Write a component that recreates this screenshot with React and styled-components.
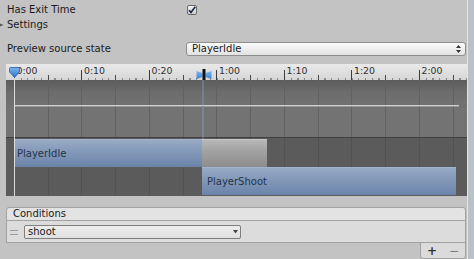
import React from 'react';
import styled, { createGlobalStyle } from 'styled-components';

const Global = createGlobalStyle`
  html, body { margin: 0; padding: 0; background: #c3c3c3; }
  body { font-family: "DejaVu Sans", "Liberation Sans", sans-serif; font-size: 10px; color: #1a1a1a; }
  * { box-sizing: border-box; }
`;

const Page = styled.div`
  width: 474px;
  height: 259px;
  display: flex;
  background: #c3c3c3;
  overflow: hidden;
`;

const Main = styled.div`
  width: 467px;
  display: flex;
  flex-direction: column;
  padding-left: 6px;
`;

const ScrollStrip = styled.div`
  width: 7px;
  border-left: 1px solid #e4e4e4;
  background: #bcc1c7;
`;

const PropRow = styled.div`
  display: flex;
  align-items: center;
  height: ${p => p.$h}px;
  margin-top: ${p => p.$mt || 0}px;
`;

const LabelCol = styled.span`
  width: 180px;
  padding-left: 1px;
  line-height: 12px;
  white-space: nowrap;
`;

const FoldLabel = styled.span`
  padding-left: 1px;
  line-height: 12px;
`;

const FoldArrow = styled.svg`
  width: 6px;
  height: 6px;
  margin-left: -6px;
`;

const CheckBox = styled.span`
  width: 10px;
  height: 10px;
  margin-left: 1px;
  border: 1px solid #6a6a6a;
  border-radius: 2px;
  background: linear-gradient(#f4f4f4, #cfcfcf);
  display: flex;
`;

const Popup = styled.div`
  width: 280px;
  height: 14px;
  border: 1px solid #8e8e8e;
  border-radius: 3px;
  background: linear-gradient(#fbfbfb, #e2e2e2);
  display: flex;
  align-items: center;
  justify-content: space-between;
  padding: 0 4px 0 5px;
  line-height: 12px;
`;

const Timeline = styled.div`
  width: 461px;
  margin-top: 7px;
  position: relative;
  display: flex;
  flex-direction: column;
`;

const Ruler = styled.div`
  height: 16px;
  display: flex;
  padding-left: 7.5px;
  background:
    repeating-linear-gradient(to right, #3c3c3c 0 1px, transparent 1px 67.5px) 7.5px 100% / 100% 10px no-repeat,
    repeating-linear-gradient(to right, #4a4a4a 0 1px, transparent 1px 67.5px) 41.5px 100% / 100% 5px no-repeat,
    repeating-linear-gradient(to right, #8a8a8a 0 1px, transparent 1px 6.75px) 7.5px 100% / 100% 2px no-repeat,
    linear-gradient(#e9e9e9, #d6d6d6);
`;

const TickLabel = styled.span`
  width: 67.5px;
  flex: none;
  padding-left: 3px;
  font-size: 9.4px;
  line-height: 14px;
  color: #303030;
`;

const CurveArea = styled.div`
  height: 57px;
  display: flex;
  flex-direction: column;
  background:
    repeating-linear-gradient(to right, #616161 0 1px, transparent 1px 33.75px) 7.5px 0 / 100% 100% no-repeat,
    linear-gradient(#5c5c5c, #6c6c6c 12px, #737373 30px, #737373);
`;

const CurveLine = styled.div`
  margin: 25px 0 0 8px;
  width: 445px;
  height: 1px;
  background: #d2d2d2;
  box-shadow: 0 1px 0 rgba(210, 210, 210, 0.4);
`;

const Tracks = styled.div`
  border-top: 1px solid #3f3f3f;
  padding: 1px 0;
  display: flex;
  flex-direction: column;
  background:
    repeating-linear-gradient(to right, #525252 0 1px, transparent 1px 33.75px) 7.5px 0 / 100% 100% no-repeat,
    #5b5b5b;
`;

const Track = styled.div`
  height: 28px;
  display: flex;
`;

const ClipBar = styled.div`
  height: 100%;
  width: ${p => p.$w}px;
  margin-left: ${p => p.$ml || 0}px;
  padding-left: ${p => p.$pad || 3}px;
  display: flex;
  align-items: center;
  color: #24344c;
  background: ${p => p.$grey
    ? 'linear-gradient(#b8b8b8, #a2a2a2 40%, #8c8c8c)'
    : 'linear-gradient(#97aac5, #8298b8 45%, #6a84a9)'};
  border-top: 1px solid ${p => (p.$grey ? '#c4c4c4' : '#a3b4cc')};
`;

const PlayheadMarker = styled.svg`
  position: absolute;
  left: 3px;
  top: 3px;
  width: 11px;
  height: 11px;
`;

const PlayheadLine = styled.div`
  position: absolute;
  left: 7.5px;
  top: 14px;
  bottom: 0;
  width: 1px;
  background: #dcdcdc;
`;

const TransitionMarker = styled.svg`
  position: absolute;
  left: 190px;
  top: 5px;
  width: 16px;
  height: 11px;
`;

const TransitionLine = styled.div`
  position: absolute;
  left: 196px;
  top: 16px;
  height: 59px;
  width: 2px;
  background: rgba(140, 160, 200, 0.35);
`;

const List = styled.div`
  width: 460px;
  margin-top: 11px;
  display: flex;
  flex-direction: column;
`;

const ListHeader = styled.div`
  height: 14px;
  border: 1px solid #a2a2a2;
  border-radius: 3px 3px 0 0;
  background: #e3e3e3;
  padding-left: 6px;
  display: flex;
  align-items: center;
  line-height: 12px;
`;

const ListRow = styled.div`
  height: 22px;
  border: 1px solid #a2a2a2;
  border-top: none;
  background: #dcdcdc;
  display: flex;
  align-items: center;
  padding-left: 3px;
`;

const Handle = styled.span`
  width: 8px;
  height: 5px;
  border-top: 1px solid #9a9a9a;
  border-bottom: 1px solid #9a9a9a;
  margin-top: 1px;
`;

const FieldPopup = styled.div`
  width: 217px;
  height: 14px;
  margin-left: 6px;
  border: 1px solid #7f7f7f;
  border-radius: 2px;
  background: linear-gradient(#ededed, #e0e0e0);
  display: flex;
  align-items: center;
  justify-content: space-between;
  padding: 0 2px 0 3px;
  line-height: 12px;
`;

const Footer = styled.div`
  display: flex;
  justify-content: flex-end;
`;

const FooterBox = styled.div`
  width: 46px;
  height: 16px;
  border: 1px solid #a2a2a2;
  border-top: none;
  border-radius: 0 0 3px 3px;
  background: #dbdbdb;
  display: flex;
`;

const FooterButton = styled.span`
  flex: 1;
  display: flex;
  align-items: center;
  justify-content: center;
  font-size: 12px;
  line-height: 14px;
  font-weight: ${p => (p.$bold ? 700 : 400)};
  color: ${p => p.$c};
`;

const ticks = ['0:00', '0:10', '0:20', '1:00', '1:10', '1:20', '2:00'];

export default function App() {
  return (
    <Page>
      <Global />
      <Main>
        <PropRow $h={18} $mt={1}>
          <LabelCol>Has Exit Time</LabelCol>
          <CheckBox>
            <svg width="8" height="8" viewBox="0 0 8 8">
              <path d="M1 4.2 L3 6.4 L7.2 0.8" fill="none" stroke="#1b2942" strokeWidth="1.7" />
            </svg>
          </CheckBox>
        </PropRow>
        <PropRow $h={12}>
          <FoldArrow viewBox="0 0 6 6">
            <polygon points="0,1.5 3.5,3 0,4.5" fill="#5a5a5a" />
          </FoldArrow>
          <FoldLabel>Settings</FoldLabel>
        </PropRow>
        <PropRow $h={17} $mt={9}>
          <LabelCol>Preview source state</LabelCol>
          <Popup>
            <span>PlayerIdle</span>
            <svg width="5" height="8" viewBox="0 0 5 8">
              <polygon points="0,3 2.5,0 5,3" fill="#333" />
              <polygon points="0,5 2.5,8 5,5" fill="#333" />
            </svg>
          </Popup>
        </PropRow>

        <Timeline>
          <Ruler>
            {ticks.map(t => (
              <TickLabel key={t}>{t}</TickLabel>
            ))}
          </Ruler>
          <CurveArea>
            <CurveLine />
          </CurveArea>
          <Tracks>
            <Track>
              <ClipBar $ml={8} $w={188} $pad={3}>PlayerIdle</ClipBar>
              <ClipBar $w={65} $grey />
            </Track>
            <Track>
              <ClipBar $ml={196} $w={254} $pad={5}>PlayerShoot</ClipBar>
            </Track>
          </Tracks>
          <PlayheadLine />
          <PlayheadMarker viewBox="0 0 11 11">
            <defs>
              <linearGradient id="ph" x1="0" y1="0" x2="0" y2="1">
                <stop offset="0" stopColor="#7ab6f0" />
                <stop offset="1" stopColor="#2f72c8" />
              </linearGradient>
            </defs>
            <path d="M1.5 0.5 H9.5 Q10.5 0.5 10.5 1.5 V5 L5.5 10.5 L0.5 5 V1.5 Q0.5 0.5 1.5 0.5 Z" fill="url(#ph)" stroke="#2b5f9f" strokeWidth="0.8" />
          </PlayheadMarker>
          <TransitionLine />
          <TransitionMarker viewBox="0 0 16 11">
            <defs>
              <linearGradient id="tm" x1="0" y1="0" x2="0" y2="1">
                <stop offset="0" stopColor="#7cbaf0" />
                <stop offset="1" stopColor="#3b7fd2" />
              </linearGradient>
            </defs>
            <path d="M0.5 2 L6.5 4 V8 L0.5 10 Z" fill="url(#tm)" />
            <path d="M15.5 2 L9.5 4 V8 L15.5 10 Z" fill="url(#tm)" />
            <rect x="6.5" y="0" width="3" height="11" fill="#111" />
          </TransitionMarker>
        </Timeline>

        <List>
          <ListHeader>Conditions</ListHeader>
          <ListRow>
            <Handle />
            <FieldPopup>
              <span>shoot</span>
              <svg width="5" height="4" viewBox="0 0 5 4">
                <polygon points="0,0 5,0 2.5,3.5" fill="#444" />
              </svg>
            </FieldPopup>
          </ListRow>
          <Footer>
            <FooterBox>
              <FooterButton $bold $c="#333">+</FooterButton>
              <FooterButton $c="#7a7a7a">−</FooterButton>
            </FooterBox>
          </Footer>
        </List>
      </Main>
      <ScrollStrip />
    </Page>
  );
}
